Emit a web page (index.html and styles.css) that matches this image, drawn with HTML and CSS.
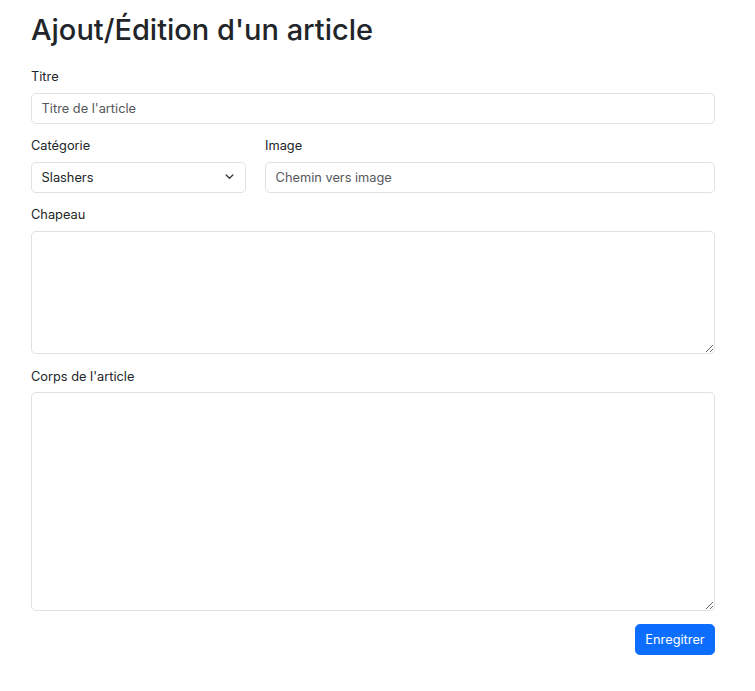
FILE: index.html
```html
<!DOCTYPE html>
<html lang="fr">
<head>
<meta charset="utf-8">
<title>Ajout/Édition d'un article</title>
<link rel="stylesheet" href="styles.css">
</head>
<body>
<main class="page">
  <h1 class="title">Ajout/Édition d'un article</h1>
  <form class="form">
    <div class="field">
      <label class="label" for="titre">Titre</label>
      <input class="control" id="titre" type="text" placeholder="Titre de l'article">
    </div>
    <div class="row">
      <div class="field col-cat">
        <label class="label">Catégorie</label>
        <div class="control select">
          <span>Slashers</span>
          <svg class="chev" width="11" height="8" viewBox="0 0 16 12" fill="none"><path d="m3 3 5 5 5-5" stroke="#343a40" stroke-width="2" stroke-linecap="round" stroke-linejoin="round"/></svg>
        </div>
      </div>
      <div class="field col-img">
        <label class="label" for="image">Image</label>
        <input class="control" id="image" type="text" placeholder="Chemin vers image">
      </div>
    </div>
    <div class="field">
      <label class="label" for="chapeau">Chapeau</label>
      <textarea class="control area area-sm" id="chapeau"></textarea>
    </div>
    <div class="field">
      <label class="label" for="corps">Corps de l'article</label>
      <textarea class="control area area-lg" id="corps"></textarea>
    </div>
    <div class="actions">
      <button class="btn" type="button">Enregitrer</button>
    </div>
  </form>
</main>
</body>
</html>
```

FILE: styles.css
```css
* { box-sizing: border-box; }
html, body { margin: 0; padding: 0; background: #fff; }
body {
  font-family: Inter, "Noto Sans", "Liberation Sans", sans-serif;
  color: #212529;
  font-size: 12.8px;
  line-height: 1.5;
}
.page {
  width: 684px;
  margin-left: 31px;
  padding-top: 13px;
}
.title {
  margin: 0 0 19.5px 0;
  font-size: 29px;
  font-weight: 500;
  line-height: 1.2;
  letter-spacing: 0;
}
.form { display: flex; flex-direction: column; }
.field { display: flex; flex-direction: column; margin-bottom: 12.5px; }
.label {
  display: block;
  font-size: 12.8px;
  line-height: 19.2px;
  margin-bottom: 6.4px;
}
.control {
  display: block;
  width: 100%;
  height: 31px;
  padding: 4.8px 9.6px;
  font-family: inherit;
  font-size: 12.8px;
  line-height: 19.2px;
  color: #212529;
  background: #fff;
  border: 1px solid #dee2e6;
  border-radius: 4.8px;
  outline: none;
}
.control::placeholder { color: #55585b; opacity: 1; }
.row { display: flex; gap: 19px; }
.col-cat { width: 215px; flex: none; }
.col-img { flex: 1; }
.select {
  display: flex;
  align-items: center;
  justify-content: space-between;
  padding-right: 10px;
}
.chev { display: block; }
.area { resize: vertical; }
.area-sm { height: 123px; }
.area-lg { height: 219px; }
.actions { display: flex; justify-content: flex-end; }
.btn {
  height: 31px;
  width: 80px;
  padding: 0;
  font-family: inherit;
  font-size: 12.8px;
  font-weight: 400;
  color: #fff;
  background: #0d6efd;
  border: 1px solid #0d6efd;
  border-radius: 4.8px;
}
```
